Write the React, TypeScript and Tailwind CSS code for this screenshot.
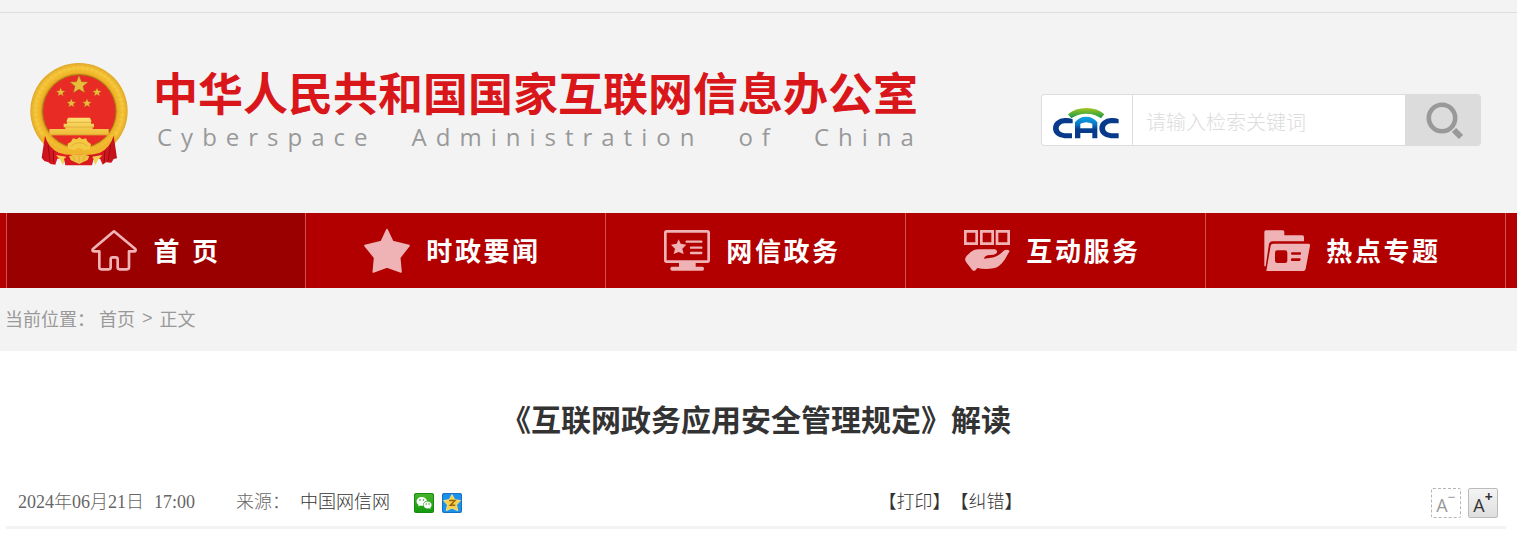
import React from "react";

const STAR = "M0,-10 L2.6,-3.4 L9.5,-3.1 L4.1,1.3 L5.9,8.1 L0,4.3 L-5.9,8.1 L-4.1,1.3 L-9.5,-3.1 L-2.6,-3.4 Z";

function Emblem() {
  return (
    <svg viewBox="27 36 300 318" className="h-[106px] w-[100px] shrink-0" role="img" aria-label="国徽">
      <defs>
        <radialGradient id="wreath" cx="50%" cy="50%" r="50%">
          <stop offset="0.74" stopColor="#c98a10" />
          <stop offset="0.8" stopColor="#f0b428" />
          <stop offset="0.9" stopColor="#f8cc40" />
          <stop offset="1" stopColor="#dfa524" />
        </radialGradient>
        <linearGradient id="gold" x1="0" y1="0" x2="0" y2="1">
          <stop offset="0" stopColor="#fbe070" />
          <stop offset="1" stopColor="#eebb35" />
        </linearGradient>
        <linearGradient id="ribbon" x1="0" y1="0" x2="1" y2="0">
          <stop offset="0" stopColor="#c8101a" />
          <stop offset="0.3" stopColor="#e82028" />
          <stop offset="0.5" stopColor="#b80c14" />
          <stop offset="0.75" stopColor="#dc1c22" />
          <stop offset="1" stopColor="#c01018" />
        </linearGradient>
      </defs>
      <ellipse cx="177" cy="183" rx="146" ry="144" fill="url(#wreath)" />
      <circle cx="177" cy="183" r="128" fill="none" stroke="#e2a421" strokeWidth="18" strokeDasharray="9 5" opacity="0.18" />
      <circle cx="178" cy="184" r="110" fill="#e92b26" stroke="#a8761a" strokeWidth="3" />
      <g fill="#e9bd3c" stroke="#a5641a" strokeWidth="0.5">
        <path d={STAR} transform="translate(177 105) scale(2.9)" />
        <path d={STAR} transform="translate(122 127) scale(1.4)" />
        <path d={STAR} transform="translate(231 127) scale(1.4)" />
        <path d={STAR} transform="translate(154 160) scale(1.4)" />
        <path d={STAR} transform="translate(201 160) scale(1.4)" />
      </g>
      <path d="M144 203 h66 l5 12 h-2 v6 h9 v11 h-4 v5 h48 v19 h-178 v-19 h48 v-5 h-5 v-11 h10 v-6 h-2z" fill="url(#gold)" />
      <path d="M136 231 h85 M141 217 h71 M90 254 h175" stroke="#d9a233" strokeWidth="2" />
      <path d="M72 255 Q98 292 145 302 L178 292 L210 302 Q256 290 283 255 L292 266 Q273 305 238 323 L117 323 Q82 302 65 266Z" fill="#efb62d" />
      <path d="M75 257 Q84 292 116 308 Q145 318 178 314 Q210 318 240 308 Q271 292 281 257 L291 325 L281 327 L274 338 L258 337 L248 344 L240 326 L112 326 L106 344 L92 342 L85 337 L73 333 L65 323Z" fill="url(#ribbon)" />
      <path d="M84 285 L90 334 M100 302 L101 340 M272 285 L264 333 M255 302 L252 339" stroke="#980b12" strokeWidth="3" />
      <path d="M108 315 L138 320 L129 345 Q121 327 108 315 M247 315 L217 320 L226 345 Q234 327 247 315" fill="#f3cf55" />
      <path d="M132 326 Q177 301 221 326 L216 346 L136 346Z" fill="#d81920" />
      <path d="M143 281 l10 -6 l6 -10 l11 3 l8 -6 l9 6 l11 -3 l5 10 l10 7 l-3 15 l-18 4 q-14 -14 -29 0 l-20 -6z" fill="#f4c943" />
      <path d="M147 318 Q177 307 208 318 L203 330 L188 337 L178 342 L166 337 L152 330Z" fill="#f0c243" />
      <path d="M154 288 Q177 268 203 288 M160 318 l6 15 M177 316 v22 M194 318 l-6 15" fill="none" stroke="#d9a233" strokeWidth="2" />
    </svg>
  );
}

function CacLogo() {
  return (
    <svg viewBox="66 78 204 99" className="h-[33px] w-[68px]" role="img" aria-label="CAC">
      <defs>
        <linearGradient id="leaf" x1="0" y1="0" x2="0" y2="1">
          <stop offset="0" stopColor="#a3c51c" />
          <stop offset="1" stopColor="#12994a" />
        </linearGradient>
        <linearGradient id="bridge" x1="0" y1="0" x2="0" y2="1">
          <stop offset="0" stopColor="#10a5e5" />
          <stop offset="0.35" stopColor="#0878c4" />
          <stop offset="0.6" stopColor="#083a8b" />
        </linearGradient>
      </defs>
      <path d="M114 100 Q136 81 169 81 Q202 81 223 100 L213 112 Q196 98 169 98 Q142 98 124 112Z" fill="url(#leaf)" />
      <path d="M128 115 Q119 110 104 111 A35 30.5 0 0 0 104 172 H126 V157 H105 A19 15 0 0 1 105 127 H128Z M266 115 Q258 110 243 111 A35 30.5 0 0 0 243 172 H266 V157 H244 A19 15 0 0 1 244 127 H266Z" fill="#083a8b" />
      <path d="M135 172 V124 Q147 107 168 107 Q190 107 202 124 V172 H187 V156 H151 V172Z M151 142 H187 V128 Q169 119 151 128Z" fillRule="evenodd" fill="url(#bridge)" />
    </svg>
  );
}

const iconClass = "h-[46px] w-[46px] shrink-0 text-[#efb3b5]";

function HomeIcon() {
  return (
    <svg viewBox="270 69 138 138" className={iconClass} aria-hidden="true">
      <path d="M339 79 L275 133 Q273 139 280 139 H295 V187 Q295 193 301 193 H323 Q329 193 329 187 V163 Q329 157 335 157 H344 Q350 157 350 163 V187 Q350 193 356 193 H378 Q384 193 384 187 V139 H399 Q406 139 403 132Z" fill="none" stroke="currentColor" strokeWidth="8" strokeLinejoin="round" />
    </svg>
  );
}

function StarIcon() {
  return (
    <svg viewBox="42 54 138 138" className={iconClass} aria-hidden="true">
      <path d="M111 59 L128 95 L177 107 L149 143 L153 186 L111 171 L70 186 L74 143 L45 107 L94 95Z" fill="currentColor" stroke="currentColor" strokeWidth="5" strokeLinejoin="round" />
    </svg>
  );
}

function ScreenIcon() {
  return (
    <svg viewBox="42 54 138 138" className={iconClass} aria-hidden="true">
      <rect x="46" y="64" width="130" height="91" rx="4" fill="none" stroke="currentColor" strokeWidth="8" />
      <path d="M87 158 H137 V170 H157 Q162 170 162 176 Q162 182 157 182 H66 Q61 182 61 176 Q61 170 66 170 H87Z" fill="currentColor" />
      <path d="M86 88 L92 101 L109 104 L97 116 L101 132 L86 126 L71 132 L75 116 L63 104 L80 101Z" fill="currentColor" />
      <path d="M110 95 H154 M123 113 H154 M123 129 H154" stroke="currentColor" strokeWidth="7" strokeLinecap="round" />
    </svg>
  );
}

function ServiceIcon() {
  return (
    <svg viewBox="42 54 138 138" className={iconClass} aria-hidden="true">
      <path d="M46 64 H80 V101 H46Z M94 64 H128 V101 H94Z M141 64 H176 V101 H141Z" fill="none" stroke="currentColor" strokeWidth="8" />
      <path d="M46 144 Q56 127 72 120 Q80 117 91 118 H134 Q142 119 141 126 Q140 133 130 134 L112 136 Q103 140 101 146 Q126 145 139 139 Q151 133 163 121 Q173 116 179 123 L164 149 Q149 171 130 175 Q104 179 82 174 L75 182 Q69 184 65 178 L48 156 Q44 150 46 144Z" fill="currentColor" />
    </svg>
  );
}

function FolderIcon() {
  return (
    <svg viewBox="42 54 138 138" className={iconClass} aria-hidden="true">
      <path d="M43 169 V66 Q43 61 48 61 H98 Q103 61 103 66 V76 H157 Q162 76 162 81 V94 H68 Q60 94 57 101 L47 169Z" fill="currentColor" />
      <path fillRule="evenodd" d="M70 101 H175 Q181 101 180 107 L167 177 Q165 183 160 183 H49 L62 107 Q63 101 70 101Z M82 121 Q75 121 75 128 V152 Q75 159 82 159 H105 Q112 159 112 152 V128 Q112 121 105 121Z M125 127 Q121 130 125 134 H151 Q156 130 151 127Z M125 145 Q120 149 125 153 H149 Q154 149 150 145Z" fill="currentColor" />
    </svg>
  );
}

const NAV = [
  { label: "首 页", icon: <HomeIcon />, active: true },
  { label: "时政要闻", icon: <StarIcon /> },
  { label: "网信政务", icon: <ScreenIcon /> },
  { label: "互动服务", icon: <ServiceIcon /> },
  { label: "热点专题", icon: <FolderIcon /> },
];

function WechatIcon() {
  return (
    <svg viewBox="0 0 20 20" className="h-5 w-5" aria-hidden="true">
      <defs>
        <linearGradient id="wx" x1="0" y1="0" x2="0" y2="1">
          <stop offset="0" stopColor="#45b52a" />
          <stop offset="1" stopColor="#149a10" />
        </linearGradient>
      </defs>
      <rect width="20" height="20" rx="2" fill="#168a12" />
      <rect x="1" y="1" width="18" height="18" rx="1.5" fill="url(#wx)" />
      <path d="M7.8 4 C4.9 4 2.6 5.9 2.6 8.4 C2.6 9.9 3.4 11 4.6 11.8 L4.2 13.4 L6 12.5 C7 12.8 8 12.9 9.2 12.6 C8.8 9.8 10.6 8 13 7.8 C12.5 5.4 10.3 4 7.8 4Z" fill="#fff" />
      <path d="M13.5 8.6 C11.2 8.6 9.6 10.1 9.6 12 C9.6 13.9 11.3 15.4 13.6 15.4 L15 15.2 L16.6 16 L16.2 14.7 C17.1 14 17.6 13.1 17.6 12 C17.6 10.1 15.8 8.6 13.5 8.6Z" fill="#fff" />
      <g fill="#249e1b">
        <circle cx="6" cy="7" r="0.8" />
        <circle cx="9.5" cy="7" r="0.8" />
        <circle cx="12.2" cy="11" r="0.7" />
        <circle cx="15" cy="11" r="0.7" />
      </g>
    </svg>
  );
}

function QzoneIcon() {
  return (
    <svg viewBox="0 0 20 20" className="h-5 w-5" aria-hidden="true">
      <rect width="20" height="20" rx="2" fill="#1670c4" />
      <rect x="1" y="1" width="18" height="18" rx="1.5" fill="#1b91e9" />
      <path d="M10 1.5 L12.8 6.6 L18.5 7.6 L14.6 11.9 L15.8 17.7 L10 15.2 L4.2 17.7 L5.4 11.9 L1.5 7.6 L7.2 6.6Z" fill="#f8d04a" stroke="#fbe58d" strokeWidth="0.8" strokeLinejoin="round" />
      <path d="M7 7.6 H13 L8.4 12.3 H13.2" fill="none" stroke="#9b6611" strokeWidth="1.5" />
    </svg>
  );
}

export default function App() {
  return (
    <div className="min-h-screen bg-white font-['Noto_Sans_CJK_SC',sans-serif] text-[#333]">
      <div className="bg-[#f3f3f3]">
        <div className="h-[13px] border-b border-[#dedede]" />
        <header className="flex h-[200px] items-start justify-between pr-9 pl-[29px]">
          <div className="flex pt-[49px]">
            <Emblem />
            <div className="pt-[9px] pl-6">
              <h1 className="font-['Liberation_Sans','Noto_Sans_CJK_SC',sans-serif] text-[45px] leading-[50px] font-bold whitespace-nowrap text-[#d9161a]">
                中华人民共和国国家互联网信息办公室
              </h1>
              <p className="flex gap-[35px] pl-1 font-['Open_Sans',sans-serif] text-[24px] leading-[32px] tracking-[9px] whitespace-nowrap text-[#999]">
                <span>Cyberspace</span>
                <span>Administration</span>
                <span>of</span>
                <span>China</span>
              </p>
            </div>
          </div>
          <form
            className="mt-[81px] flex h-[52px] w-[440px] shrink-0 overflow-hidden rounded-[3px] border border-[#dcdcdc] bg-white"
            onSubmit={(e) => e.preventDefault()}
          >
            <div className="flex w-[91px] shrink-0 items-center justify-center border-r border-[#dcdcdc] pt-[6px] pr-0.5">
              <CacLogo />
            </div>
            <input
              type="text"
              aria-label="检索关键词"
              placeholder="请输入检索关键词"
              className="min-w-0 flex-1 px-[13px] pt-[3px] text-[20px] font-light outline-none placeholder:text-[#dcdcdc]"
            />
            <button type="submit" aria-label="搜索" className="flex w-[75px] shrink-0 items-center justify-center bg-[#dcdcdc] pl-[3px]">
              <svg viewBox="0 0 40 40" className="h-10 w-10" aria-hidden="true">
                <circle cx="18" cy="18" r="13.2" fill="none" stroke="#999" strokeWidth="4.6" />
                <path d="M30 30 L37 37" stroke="#999" strokeWidth="6" />
              </svg>
            </button>
          </form>
        </header>
      </div>

      <nav className="bg-[#b20000] pr-[11px] pl-[6px]">
        <ul className="grid grid-cols-5">
          {NAV.map((item) => (
            <li key={item.label} className="border-r border-[#d34f4f] first:border-l">
              <a
                href="#"
                className={
                  item.active
                    ? "flex h-[75px] items-center justify-center gap-4 bg-[#9b0000]"
                    : "flex h-[75px] items-center justify-center gap-4 pr-[6px]"
                }
              >
                {item.icon}
                <span className="pt-0.5 font-['Liberation_Sans','Noto_Sans_CJK_SC',sans-serif] text-[26px] leading-[38px] font-bold tracking-widest whitespace-nowrap text-white">
                  {item.label}
                </span>
              </a>
            </li>
          ))}
        </ul>
      </nav>

      <div className="flex h-[63px] items-center bg-[#f3f3f3] pb-0.5 pl-[5px] text-[18px] text-[#999]">
        <span className="pr-1">当前位置：</span>
        <a href="#">首页</a>
        <span className="px-[7px] font-['Liberation_Sans',sans-serif]">&gt;</span>
        <a href="#">正文</a>
      </div>

      <main className="pr-[11px] pl-[6px]">
        <h2 className="pt-[45px] text-center text-[30px] leading-[44px] font-bold">
          《互联网政务应用安全管理规定》解读
        </h2>
        <div className="mt-[35px] flex h-[54px] items-center border-b-[3px] border-[#f3f3f3] pt-1 pr-2 pl-3 font-['Liberation_Serif','Noto_Sans_CJK_SC',serif] text-[18px] font-light text-[#666]">
          <div className="flex w-[58%] items-center">
            <time className="flex gap-[10px]">
              <span>2024年06月21日</span>
              <span>17:00</span>
            </time>
            <span className="pl-[41px]">来源：</span>
            <span className="pl-[10px] text-[#333]">中国网信网</span>
            <a href="#" aria-label="微信" className="ml-6">
              <WechatIcon />
            </a>
            <a href="#" aria-label="QQ空间" className="ml-2">
              <QzoneIcon />
            </a>
          </div>
          <div className="flex flex-1 items-center justify-between pl-0.5 text-[#333]">
            <div className="flex">
              <button type="button">【打印】</button>
              <button type="button">【纠错】</button>
            </div>
            <div className="flex gap-[7px] font-['Open_Sans',sans-serif] font-normal">
              <button
                type="button"
                aria-label="缩小字号"
                className="flex h-[30px] w-[30px] items-start justify-center rounded-[2px] border border-dashed border-[#b5b5b5] text-[#999]"
              >
                <span className="pt-1 text-[18px] leading-6">A</span>
                <span className="text-[14px] leading-4">−</span>
              </button>
              <button
                type="button"
                aria-label="放大字号"
                className="flex h-[30px] w-[30px] items-start justify-center rounded-[2px] border border-[#bbb] bg-linear-to-b from-[#f4f4f4] to-[#dedede] text-[#333]"
              >
                <span className="pt-1 text-[18px] leading-6">A</span>
                <span className="text-[14px] leading-4 font-bold">+</span>
              </button>
            </div>
          </div>
        </div>
      </main>
    </div>
  );
}
